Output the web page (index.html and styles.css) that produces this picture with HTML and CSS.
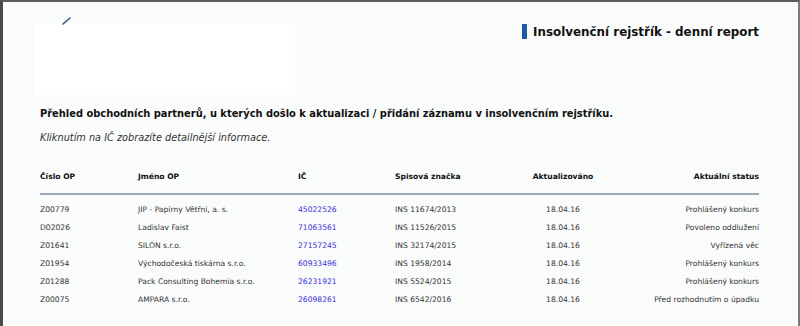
FILE: index.html
```html
<!DOCTYPE html>
<html lang="cs">
<head>
<meta charset="utf-8">
<link rel="stylesheet" href="styles.css">
</head>
<body>
<div class="frame">
  <div class="top">
    <div class="logo">
      <svg class="broken" width="10" height="8" viewBox="0 0 10 8"><path d="M1 7 L8 1" stroke="#2b5a86" stroke-width="1.6" stroke-linecap="round"/></svg>
    </div>
    <h1 class="title"><span class="bar"></span>Insolvenční rejstřík - denní report</h1>
  </div>
  <div class="content">
    <p class="lead">Přehled obchodních partnerů, u kterých došlo k aktualizaci / přidání záznamu v insolvenčním rejstříku.</p>
    <p class="hint">Kliknutím na IČ zobrazíte detailnější informace.</p>
    <table class="report">
      <colgroup>
        <col class="c1"><col class="c2"><col class="c3"><col class="c4"><col class="c5"><col class="c6">
      </colgroup>
      <thead>
        <tr><th>Číslo OP</th><th>Jméno OP</th><th>IČ</th><th>Spisová značka</th><th class="mid">Aktualizováno</th><th class="end">Aktuální status</th></tr>
      </thead>
      <tbody>
        <tr class="first"><td>Z00779</td><td>JIP - Papírny Větřní, a. s.</td><td><a href="#">45022526</a></td><td>INS 11674/2013</td><td class="mid">18.04.16</td><td class="end">Prohlášený konkurs</td></tr>
        <tr><td>D02026</td><td>Ladislav Faist</td><td><a href="#">71063561</a></td><td>INS 11526/2015</td><td class="mid">18.04.16</td><td class="end">Povoleno oddlužení</td></tr>
        <tr><td>Z01641</td><td>SILON s.r.o.</td><td><a href="#">27157245</a></td><td>INS 32174/2015</td><td class="mid">18.04.16</td><td class="end">Vyřízená věc</td></tr>
        <tr><td>Z01954</td><td>Východočeská tiskárna s.r.o.</td><td><a href="#">60933496</a></td><td>INS 1958/2014</td><td class="mid">18.04.16</td><td class="end">Prohlášený konkurs</td></tr>
        <tr><td>Z01288</td><td>Pack Consulting Bohemia s.r.o.</td><td><a href="#">26231921</a></td><td>INS 5524/2015</td><td class="mid">18.04.16</td><td class="end">Prohlášený konkurs</td></tr>
        <tr><td>Z00075</td><td>AMPARA s.r.o.</td><td><a href="#">26098261</a></td><td>INS 6542/2016</td><td class="mid">18.04.16</td><td class="end">Před rozhodnutím o úpadku</td></tr>
      </tbody>
    </table>
  </div>
</div>
</body>
</html>
```
FILE: styles.css
```css
html, body {
  margin: 0;
  padding: 0;
  background: #f9fcfb;
}
body {
  font-family: "DejaVu Sans", Verdana, sans-serif;
  color: #222;
}
.frame {
  box-sizing: border-box;
  height: 326px;
  border-top: 2px solid #5c5c5c;
  border-left: 3px solid #4a4a4a;
  border-right: 2px solid #7a7a7a;
  background: #f9fcfb;
  overflow: hidden;
}
.top {
  display: flex;
  justify-content: space-between;
  align-items: flex-start;
  padding: 21px 39px 0 31px;
}
.logo {
  position: relative;
  width: 261px;
  height: 72px;
  background: #ffffff;
}
.broken {
  position: absolute;
  left: 28px;
  top: -6px;
}
.title {
  display: flex;
  align-items: center;
  gap: 6px;
  margin: 1px 0 0 0;
  font-size: 11.9px;
  font-weight: bold;
  color: #111;
}
.bar {
  display: inline-block;
  width: 5px;
  height: 15px;
  background: #1d5aa0;
}
.content {
  padding: 0 39px 0 37px;
}
.lead {
  margin: 13px 0 0 0;
  font-size: 9.9px;
  font-weight: bold;
  color: #111;
}
.hint {
  margin: 13px 0 0 0;
  font-size: 9.75px;
  font-style: italic;
  color: #333;
}
.report {
  width: 100%;
  margin-top: 26px;
  border-collapse: collapse;
  table-layout: fixed;
  font-size: 7.6px;
  color: #333;
}
.c1 { width: 98px; }
.c2 { width: 160px; }
.c3 { width: 97px; }
.c4 { width: 125px; }
.c5 { width: 86px; }
.c6 { width: auto; }
.report th {
  text-align: left;
  font-weight: bold;
  color: #111;
  padding: 0 0 10px 0;
  border-bottom: 2px solid #9aabbb;
  height: 14px;
}
.report td {
  padding: 0;
  height: 18px;
  white-space: nowrap;
}
.report tr.first td {
  padding-top: 5px;
}
.report .mid { text-align: center; }
.report .end { text-align: right; }
.report a {
  color: #3a2fd6;
  text-decoration: none;
}
```
